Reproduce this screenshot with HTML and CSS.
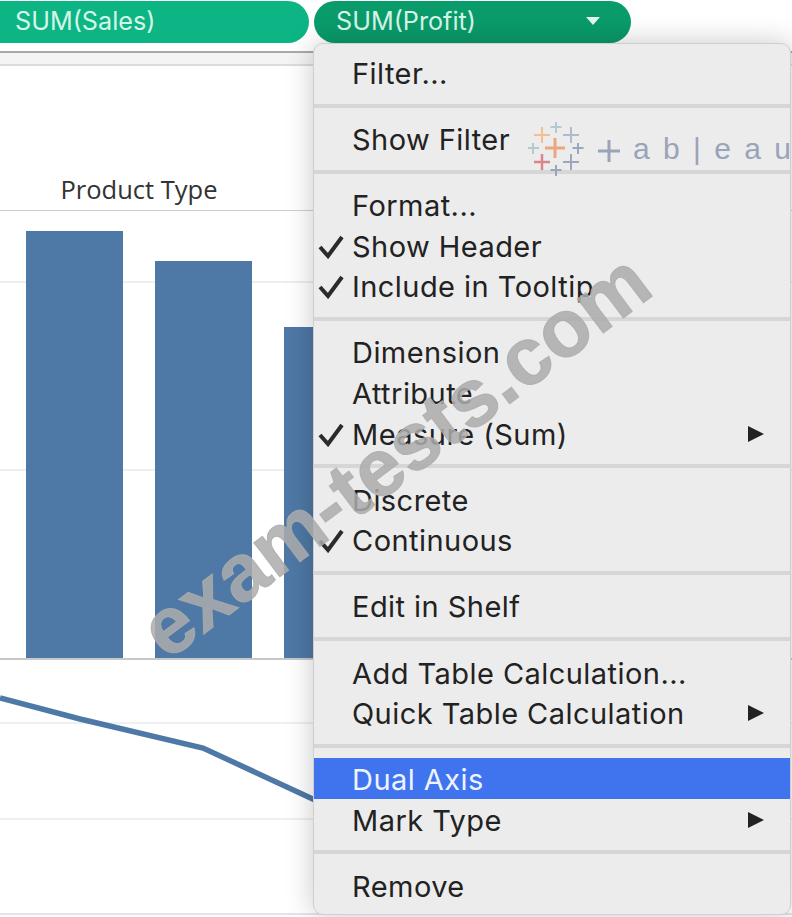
FILE: index.html
```html
<!DOCTYPE html>
<html lang="en">
<head>
    <meta charset="UTF-8" />
    <title>SUM(Profit) menu</title>
    <link rel="stylesheet" href="styles.css">
</head>
<body>
    <div class="shelf">
        <div class="pill pill-sales">SUM(Sales)</div>
        <div class="pill pill-profit">
            <span>SUM(Profit)</span>
            <span class="pill-caret"></span>
        </div>
    </div>

    <div class="band"></div>

    <div class="title-pane">Product Type</div>

    <div class="bars-pane">
        <div class="bar bar-1"></div>
        <div class="bar bar-2"></div>
        <div class="bar bar-3"></div>
    </div>

    <svg class="line-pane" width="792" height="258" viewBox="0 0 792 258">
        <line x1="0" y1="63" x2="792" y2="63" stroke="#f0f0f0" stroke-width="2" />
        <line x1="0" y1="159" x2="792" y2="159" stroke="#f0f0f0" stroke-width="2" />
        <line x1="0" y1="254" x2="792" y2="254" stroke="#e4e4e4" stroke-width="2" />
        <polyline points="0,38 80,59 203,88 330,147" fill="none" stroke="#4e78a6" stroke-width="5.5" />
    </svg>

    <div class="menu">
        <div class="menu-group">
            <div class="item">Filter...</div>
        </div>
        <div class="menu-group">
            <div class="item">Show Filter</div>
        </div>
        <div class="menu-group">
            <div class="item">Format...</div>
            <div class="item">
                <svg class="check" width="26" height="24" viewBox="0 0 26 24"><path d="M2 12L10 21L24 2" /></svg>
                Show Header
            </div>
            <div class="item">
                <svg class="check" width="26" height="24" viewBox="0 0 26 24"><path d="M2 12L10 21L24 2" /></svg>
                Include in Tooltip
            </div>
        </div>
        <div class="menu-group">
            <div class="item">Dimension</div>
            <div class="item">Attribute</div>
            <div class="item sub">
                <svg class="check" width="26" height="24" viewBox="0 0 26 24"><path d="M2 12L10 21L24 2" /></svg>
                Measure (Sum)
            </div>
        </div>
        <div class="menu-group">
            <div class="item">Discrete</div>
            <div class="item">
                <svg class="check" width="26" height="24" viewBox="0 0 26 24"><path d="M2 12L10 21L24 2" /></svg>
                Continuous
            </div>
        </div>
        <div class="menu-group">
            <div class="item">Edit in Shelf</div>
        </div>
        <div class="menu-group">
            <div class="item">Add Table Calculation...</div>
            <div class="item sub">Quick Table Calculation</div>
        </div>
        <div class="menu-group">
            <div class="item active">Dual Axis</div>
            <div class="item sub">Mark Type</div>
        </div>
        <div class="menu-group">
            <div class="item">Remove</div>
        </div>
    </div>

    <!-- logo y marca de agua van encima de todo -->
    <div class="logo">
        <svg class="logo-mark" width="56" height="56" viewBox="0 0 56 56" fill="none" stroke-width="2">
            <path d="M27 17v20M17 27h20" stroke="#ec9a6c" stroke-width="3" />
            <path d="M14 6v16M6 14h16" stroke="#f2b880" />
            <path d="M14 33v16M6 41h16" stroke="#d9747c" stroke-width="2.5" />
            <path d="M43 6v16M35 14h16" stroke="#a3b3c6" />
            <path d="M43 33v16M35 41h16" stroke="#8e9cb4" />
            <path d="M28 1v11M22.500 6h11" stroke="#a9c4cc" />
            <path d="M28 44v11M22.500 49h11" stroke="#8e9cb4" />
            <path d="M5 22v11M0 27h11" stroke="#a9c4cc" />
            <path d="M50 22v11M44.500 27h11" stroke="#8e9cb4" />
        </svg>
        <svg class="logo-plus" width="24" height="24" viewBox="0 0 24 24">
            <path d="M12 1v22M1 12h22" />
        </svg>
        <span class="logo-text">a b | e a u</span>
    </div>

    <div class="watermark">exam-tests.com</div>
</body>
</html>
```

FILE: styles.css
```css
body {
    margin: 0;
    width: 792px;
    height: 917px;
    overflow: hidden;
    position: relative;
    background-color: white;
    font-family: Inter, "Noto Sans", sans-serif;
}

.shelf {
    display: flex;
    gap: 5px;
    height: 42px;
    padding-top: 1px;
    margin-left: -20px;
}

.pill {
    display: flex;
    align-items: center;
    justify-content: space-between;
    box-sizing: border-box;
    height: 42px;
    padding-bottom: 2px;
    border-radius: 21px;
    color: #d6f5e8;
    font-size: 25.2px;
}

.pill-sales {
    width: 329px;
    padding-left: 35px;
    background-color: #0cb583;
}

.pill-profit {
    width: 317px;
    padding-left: 22px;
    padding-right: 31px;
    background-color: #0a9b6b;
}

.pill-caret {
    width: 0;
    height: 0;
    border-left: 7px solid transparent;
    border-right: 7px solid transparent;
    border-top: 8px solid #e4f7ef;
}

.band {
    height: 11px;
    margin-top: 8px;
    background-color: #f4f4f4;
    border-top: 2px solid #a9a9a9;
    border-bottom: 2px solid #dcdcdc;
}

.title-pane {
    box-sizing: border-box;
    width: 100%;
    height: 145px;
    padding: 107px 514px 0 0;
    text-align: center;
    font-family: "Open Sans", sans-serif;
    font-size: 25.5px;
    line-height: 33px;
    color: #333;
    border-bottom: 1px solid #cfcfcf;
}

.bars-pane {
    display: flex;
    align-items: flex-end;
    gap: 32px;
    box-sizing: border-box;
    height: 449px;
    padding-left: 26px;
    border-bottom: 2px solid #c8c8c8;
    background:
        linear-gradient(#eee, #eee) 0 70px / 100% 2px no-repeat,
        linear-gradient(#eee, #eee) 0 258px / 100% 2px no-repeat;
}

.bar {
    width: 97px;
    background-color: #4e78a6;
}

.bar-1 { height: 427px; }
.bar-2 { height: 397px; }
.bar-3 { height: 331px; }

.line-pane {
    display: block;
}

.menu {
    position: absolute;
    top: 43px;
    left: 313px;
    width: 478px;
    height: 872px;
    box-sizing: border-box;
    padding-top: 8px;
    background-color: #ececec;
    border: 1px solid #cfcfcf;
    border-radius: 10px;
    box-shadow: 0 0 28px rgba(0,0,0,0.22);
    overflow: hidden;
}

.menu-group {
    padding-bottom: 11px;
    margin-bottom: 10.5px;
    border-bottom: 4px solid #d6d6d6;
}

.menu-group:last-child {
    border-bottom: none;
}

.item {
    position: relative;
    height: 40.6px;
    line-height: 44.6px;
    padding-left: 38px;
    font-size: 29px;
    letter-spacing: 0.45px;
    color: #222;
}

.item.active {
    background-color: #3f74ee;
    color: #eef3ff;
}

.check {
    position: absolute;
    left: 4px;
    top: 10px;
    fill: none;
    stroke: #2b2b2b;
    stroke-width: 4;
}

.item.sub::after {
    content: "";
    position: absolute;
    right: 26px;
    top: 13px;
    width: 0;
    height: 0;
    border-top: 8px solid transparent;
    border-bottom: 8px solid transparent;
    border-left: 16px solid #222;
}

.logo {
    position: absolute;
    top: 121px;
    left: 528px;
    width: 264px;
    overflow: hidden;
    display: flex;
    align-items: center;
    gap: 13px;
}

.logo-mark {
    flex: none;
    opacity: 0.85;
}

.logo-plus {
    flex: none;
    margin-top: 4px;
    fill: none;
    stroke: #9aa3b8;
    stroke-width: 3;
}

.logo-text {
    margin-left: -1px;
    font-family: "Liberation Sans", sans-serif;
    font-size: 30px;
    color: #9aa3b8;
    white-space: nowrap;
    word-spacing: 3px;
    letter-spacing: 1px;
}

.watermark {
    position: absolute;
    top: 405px;
    left: 75px;
    width: 640px;
    text-align: center;
    font-family: "Liberation Sans", sans-serif;
    font-weight: bold;
    font-size: 81px;
    line-height: 100px;
    color: rgba(172,172,172,0.85);
    -webkit-text-stroke: 1px rgba(172,172,172,0.85);
    white-space: nowrap;
    transform: rotate(-37deg);
}
```
